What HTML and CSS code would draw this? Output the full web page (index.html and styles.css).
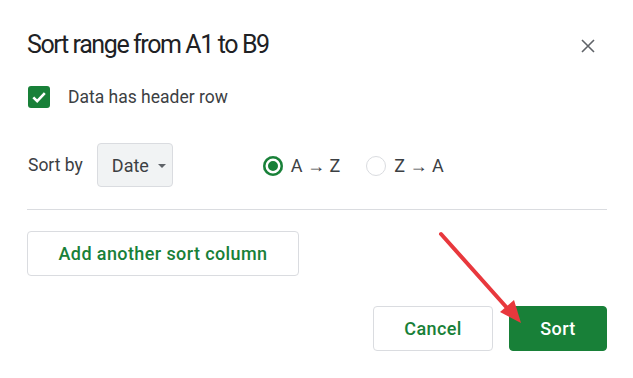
FILE: index.html
```html
<!DOCTYPE html>
<html>
<head>
<meta charset="utf-8">
<link rel="stylesheet" href="styles.css">
</head>
<body>
<div class="dialog">
  <div class="header">
    <h1 class="title">Sort range from A1 to B9</h1>
    <svg class="close" width="14" height="14" viewBox="0 0 14 14"><path d="M1 1L13 13M13 1L1 13" stroke="#5f6368" stroke-width="1.6" fill="none"/></svg>
  </div>
  <label class="check-row">
    <span class="checkbox"><svg width="22" height="22" viewBox="0 0 22 22"><path d="M5.3 11.3L9.2 15.2L16.8 7.2" stroke="#fff" stroke-width="2.6" fill="none"/></svg></span>
    <span class="label">Data has header row</span>
  </label>
  <div class="sort-row">
    <span class="label">Sort by</span>
    <div class="select"><span>Date</span><span class="caret"></span></div>
    <div class="radios">
      <span class="radio on"></span><span class="label">A → Z</span>
      <span class="radio off"></span><span class="label">Z → A</span>
    </div>
  </div>
  <div class="divider"></div>
  <button class="btn add">Add another sort column</button>
  <div class="footer">
    <button class="btn cancel">Cancel</button>
    <button class="btn primary">Sort</button>
  </div>
  <svg class="arrow" width="633" height="378" viewBox="0 0 633 378">
    <path d="M441 234L508 309" stroke="#e8383d" stroke-width="4" stroke-linecap="round" fill="none"/>
    <path d="M521 323L500 312L514 300Z" fill="#e8383d"/>
  </svg>
</div>
</body>
</html>
```
FILE: styles.css
```css
* { box-sizing: border-box; }
html, body { margin: 0; padding: 0; background: #fff; }
body { font-family: Roboto, "Liberation Sans", sans-serif; color: #3c4043; }
.dialog { position: relative; width: 633px; height: 378px; padding: 29px 26px 0 27px; }
.header { display: flex; justify-content: space-between; align-items: center; height: 32px; }
.title { margin: 0; font-size: 25px; font-weight: 400; line-height: 32px; color: #202124; letter-spacing: -1.4px; }
.close { margin-right: 12px; margin-top: 2px; }
.check-row { display: flex; align-items: center; margin-top: 25px; height: 22px; padding-left: 1px; }
.checkbox { width: 22px; height: 22px; background: #188038; border-radius: 3px; display: block; }
.checkbox svg { display: block; }
.label { font-size: 17.5px; line-height: 22px; color: #3c4043; }
.check-row .label { margin-left: 18px; }
.sort-row { display: flex; align-items: center; margin-top: 35px; height: 44px; padding-left: 1px; }
.select { display: flex; align-items: center; margin-left: 14px; width: 76px; height: 44px; background: #f1f3f4; border: 1px solid #dadce0; border-radius: 4px; padding-left: 14px; font-size: 18px; color: #3c4043; }
.caret { width: 0; height: 0; border-left: 4.5px solid transparent; border-right: 4.5px solid transparent; border-top: 4.5px solid #5f6368; margin-left: 9px; margin-top: 1px; }
.radios { display: flex; align-items: center; margin-left: 90px; margin-top: 2px; }
.radio { width: 20px; height: 20px; border-radius: 50%; display: block; }
.radio.on { background: #188038; box-shadow: inset 0 0 0 2.5px #188038, inset 0 0 0 5px #fff; }
.radio.off { border: 1px solid #dadce0; margin-left: 26px; }
.radios .label { margin-left: 8px; font-size: 18px; }
.divider { height: 1px; background: #dadce0; margin-top: 22px; }
.btn { font-family: Roboto, "Liberation Sans", sans-serif; font-weight: 500; font-size: 18px; letter-spacing: 0.4px; border-radius: 4px; cursor: pointer; padding: 0; display: block; }
.add { margin-top: 21px; width: 272px; height: 45px; background: #fff; border: 1px solid #dadce0; color: #188038; }
.footer { display: flex; justify-content: flex-end; gap: 16px; margin-top: 30px; }
.cancel { width: 120px; height: 45px; background: #fff; border: 1px solid #dadce0; color: #188038; }
.primary { width: 98px; height: 45px; background: #188038; border: 1px solid #188038; color: #fff; }
.arrow { position: absolute; left: 0; top: 0; pointer-events: none; }
```
